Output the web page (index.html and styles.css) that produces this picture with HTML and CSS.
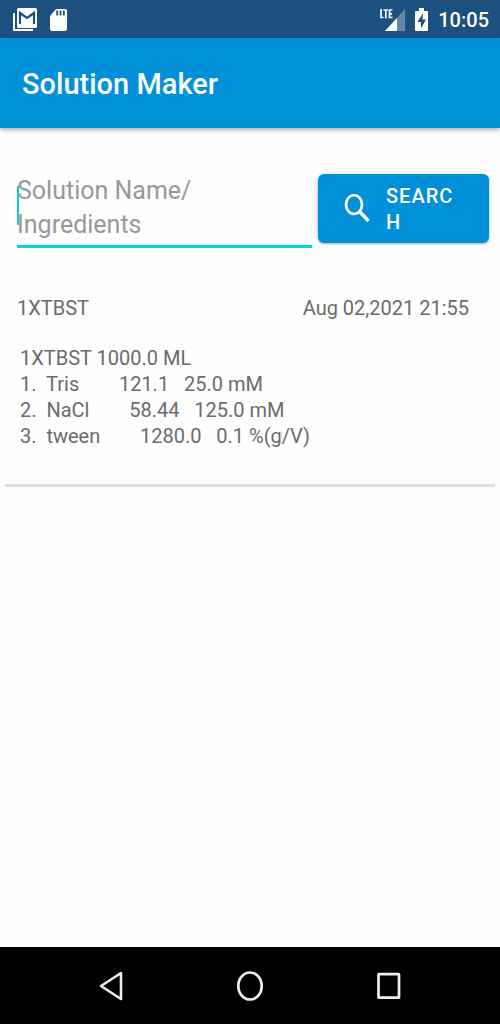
FILE: index.html
```html
<!DOCTYPE html>
<html lang="en">
<head>
<meta charset="utf-8">
<meta name="viewport" content="width=device-width, initial-scale=1">
<title>Solution Maker</title>
<link rel="stylesheet" href="styles.css">
</head>
<body>
<div class="status-bar">
  <div class="status-group">
    <svg width="25" height="24" viewBox="0 0 25 24" aria-hidden="true">
      <path d="M1 5v17h19" fill="none" stroke="#fff" stroke-width="2"/>
      <rect x="4" y="0" width="20" height="20" rx="1.5" fill="#fff"/>
      <path d="M7 16V5l7 5 7-5v11" fill="none" stroke="#1d4f7f" stroke-width="2.2"/>
    </svg>
    <svg width="17" height="24" viewBox="0 0 17 24" aria-hidden="true">
      <path d="M6 1h9q2 0 2 2v18q0 2-2 2H2q-2 0-2-2V8z" fill="#fff"/>
      <path d="M7.200 2.500v5M10.500 2.500v5M13.800 2.500v5" stroke="#1d4f7f" stroke-width="1.800"/>
    </svg>
  </div>
  <div class="status-group status-right">
    <svg width="26" height="24" viewBox="0 0 26 24" role="img" aria-label="LTE signal">
      <path d="M26 1v22H6z" fill="#6487a8"/>
      <path d="M18 10v13H6z" fill="#fff"/>
      <path d="M2 1v8.500h2.500M4.500 2h4.500M6.800 2v8.500M13.500 2h-3v7.500h3M10.500 5.800h2.500" fill="none" stroke="#fff" stroke-width="1.700"/>
    </svg>
    <svg width="13" height="24" viewBox="0 0 13 24" aria-hidden="true">
      <path d="M4 0h5v3h3q1 0 1 1v18q0 1-1 1H1q-1 0-1-1V4q0-1 1-1h3z" fill="#fff"/>
      <path d="M8 5 2.500 14H6v6.500L11 11.500H7.500z" fill="#1d4f7f"/>
    </svg>
    <span class="clock">10:05</span>
  </div>
</div>
<header class="app-bar"><h1 class="app-title">Solution Maker</h1></header>
<main class="content">
  <form class="search">
    <div class="field">
      <textarea class="search-input" rows="2" aria-label="Solution Name/Ingredients" placeholder="Solution Name/&#10;Ingredients"></textarea>
      <span class="caret"></span>
    </div>
    <button class="search-button" type="button">
      <svg width="26" height="30" viewBox="0 0 26 30" aria-hidden="true">
        <ellipse cx="10" cy="10.500" rx="8" ry="9.300" fill="none" stroke="#fff" stroke-width="2.700"/>
        <path d="m15.500 17.500 9 9.500" stroke="#fff" stroke-width="3.400"/>
      </svg>
      <span class="search-label">SEARCH</span>
    </button>
  </form>
  <article class="solution">
    <div class="solution-head">
      <h2 class="solution-name">1XTBST</h2>
      <time datetime="2021-08-02T21:55">Aug 02,2021 21:55</time>
    </div>
    <p class="recipe">1XTBST 1000.0 ML
1.  Tris        121.1   25.0 mM
2.  NaCl        58.44   125.0 mM
3.  tween        1280.0   0.1 %(g/V)</p>
  </article>
</main>
<nav class="nav-bar">
  <button class="nav-button" type="button" aria-label="Back">
    <svg width="28" height="32" viewBox="0 0 28 32"><path d="M24 3v26L4 16z" fill="none" stroke="#eee" stroke-width="2.600" stroke-linejoin="round"/></svg>
  </button>
  <button class="nav-button" type="button" aria-label="Home">
    <svg width="28" height="32" viewBox="0 0 28 32"><ellipse cx="14" cy="16" rx="11.700" ry="13.500" fill="none" stroke="#eee" stroke-width="2.700"/></svg>
  </button>
  <button class="nav-button" type="button" aria-label="Recent apps">
    <svg width="28" height="32" viewBox="0 0 28 32"><rect x="3.500" y="4.200" width="20.500" height="23.500" rx="0.500" fill="none" stroke="#eee" stroke-width="2.700"/></svg>
  </button>
</nav>
</body>
</html>
```
FILE: styles.css
```css
* { box-sizing: border-box; }

body {
  margin: 0;
  min-height: 100vh;
  display: flex;
  flex-direction: column;
  background: #fefefe;
  color: #6b6b6b;
  font: 20px/26px Roboto, sans-serif;
}

svg { display: block; flex: none; }

.status-bar {
  display: flex;
  justify-content: space-between;
  align-items: center;
  height: 38px;
  padding: 2px 11px 0 13px;
  background: #1d4f7f;
  color: #fff;
}

.status-group { display: flex; align-items: center; gap: 12px; }
.status-right { gap: 10px; }
.clock { font-weight: 500; }

.app-bar {
  display: flex;
  align-items: center;
  height: 90px;
  padding: 2px 22px 0;
  background: #0090d7;
  box-shadow: 0 2px 4px rgba(0, 0, 0, 0.3);
}

.app-title {
  margin: 0;
  color: #fff;
  font-size: 29px;
  line-height: 36px;
  font-weight: 500;
}

.content { flex: 1; padding: 46px 5px 0; }

.search {
  display: flex;
  align-items: flex-start;
  gap: 6px;
  padding: 0 6px 0 12px;
}

.field { position: relative; flex: 1; min-width: 0; }

.search-input {
  display: block;
  width: 100%;
  height: 74px;
  padding: 0;
  border: 0;
  border-bottom: 3px solid #00d9c3;
  outline: 0;
  background: transparent;
  resize: none;
  overflow: hidden;
  font: 25px/34px Roboto, sans-serif;
}

.search-input::placeholder { color: #989898; opacity: 1; }

.caret {
  position: absolute;
  top: 12px;
  left: 0;
  width: 2px;
  height: 39px;
  background: #00d9c3;
}

.search-button {
  display: flex;
  align-items: center;
  gap: 16px;
  width: 171px;
  min-height: 69px;
  padding: 8px 28px 8px 26px;
  border: 0;
  border-radius: 6px;
  background: #0090d7;
  box-shadow: 0 1px 3px rgba(0, 0, 0, 0.35);
  color: #fff;
  font: 500 20px/26px Roboto, sans-serif;
  letter-spacing: 1px;
  text-align: left;
}

.search-label { flex: 1; word-break: break-all; }

.solution {
  margin-top: 47px;
  padding-bottom: 35px;
  border-bottom: 3px solid #dedede;
}

.solution-head {
  display: flex;
  justify-content: space-between;
  padding: 0 26px 0 12px;
}

.solution-name { margin: 0; font: inherit; }

.recipe {
  margin: 24px 0 0;
  padding-left: 15px;
  white-space: pre-wrap;
}

.nav-bar {
  display: flex;
  justify-content: center;
  align-items: center;
  gap: 111px;
  height: 77px;
  background: #000;
}

.nav-button { padding: 0; border: 0; background: none; }
```
